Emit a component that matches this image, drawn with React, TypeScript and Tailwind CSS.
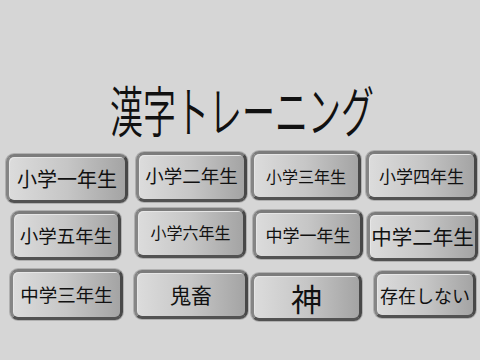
import React from 'react';

type Btn = { label: string; box: string; text: string };

const rows: { box: string; items: Btn[] }[] = [
  {
    box: 'h-[52px]',
    items: [
      { label: '小学一年生', box: 'ml-[6px] mt-[3px] w-[122px] h-[49px]', text: 'text-[20px]' },
      { label: '小学二年生', box: 'ml-[8px] mt-[1px] w-[111px] h-[50px]', text: 'text-[18.5px] -mt-[3px]' },
      { label: '小学三年生', box: 'ml-[4px] mt-0 w-[110px] h-[49px]', text: 'text-[16px]' },
      { label: '小学四年生', box: 'ml-[5px] mt-0 w-[111px] h-[49px]', text: 'text-[17px]' },
    ],
  },
  {
    box: 'mt-[5px] h-[53px]',
    items: [
      { label: '小学五年生', box: 'ml-[11px] mt-[3px] w-[110px] h-[49px]', text: 'text-[18.5px]' },
      { label: '小学六年生', box: 'ml-[14px] mt-0 w-[111px] h-[50px]', text: 'text-[16px] -mt-[3px]' },
      { label: '中学一年生', box: 'ml-[7px] mt-[2px] w-[110px] h-[49px]', text: 'text-[17px]' },
      { label: '中学二年生', box: 'ml-[4px] mt-[4px] w-[111px] h-[49px]', text: 'text-[20.5px]' },
    ],
  },
  {
    box: 'mt-[8px] h-[52px]',
    items: [
      { label: '中学三年生', box: 'ml-[10px] mt-0 w-[113px] h-[51px]', text: 'text-[18.5px]' },
      { label: '鬼畜', box: 'ml-[11px] mt-[1px] w-[114px] h-[49px]', text: 'text-[21px]' },
      { label: '神', box: 'ml-[3px] mt-[4px] w-[111px] h-[48px]', text: 'text-[31px]' },
      { label: '存在しない', box: 'ml-[12px] mt-[2px] w-[102px] h-[47px]', text: 'text-[18px]' },
    ],
  },
];

const MenuButton: React.FC<Btn> = ({ label, box, text }) => (
  <button
    className={`${box} shrink-0 flex items-center justify-center rounded-[8px] border-[3px] border-t-[#7c7c7c] border-l-[#858585] border-r-[#484848] border-b-[#525252] bg-gradient-to-r from-[#dcdcdc] via-[#c6c6c6] to-[#a4a4a4] shadow-[0_0_0_1px_#b0b0b0,inset_1px_1px_0_#e6e6e6] text-[#111] leading-none`}
  >
    <span className={text}>{label}</span>
  </button>
);

export default function App() {
  return (
    <div className="w-[480px] h-[360px] overflow-hidden bg-[#d6d6d6] font-['Noto_Sans_CJK_JP',sans-serif]">
      <div className="pt-[81px] h-[151px] flex justify-center pl-[5px]">
        <h1 className="text-[55px] leading-[54px] font-[350] text-[#111] scale-x-[0.6] whitespace-nowrap">
          漢字トレーニング
        </h1>
      </div>
      {rows.map((row, i) => (
        <div key={i} className={`${row.box} flex items-start`}>
          {row.items.map(b => (
            <MenuButton key={b.label} {...b} />
          ))}
        </div>
      ))}
    </div>
  );
}
